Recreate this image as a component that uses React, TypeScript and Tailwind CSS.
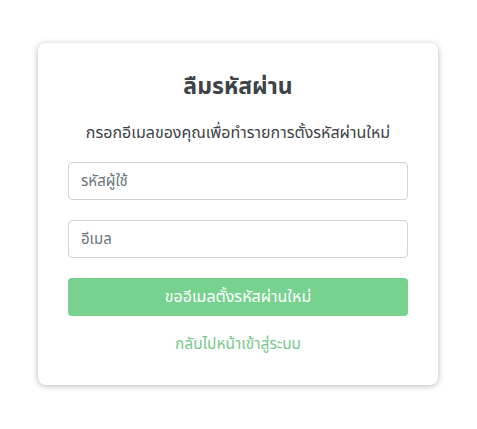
import React from 'react';

export default function App() {
  const [username, setUsername] = React.useState('');
  const [email, setEmail] = React.useState('');

  return (
    <div className="min-h-screen w-full bg-white font-['Noto_Sans_Thai','Noto_Sans','Liberation_Sans',sans-serif]">
      <div className="pt-[43px] pl-[38px]">
        <div className="w-[400px] rounded-lg bg-white px-[30px] pt-[28px] pb-[28px] shadow-[0_1px_6px_rgba(0,0,0,0.28)]">
          <h1 className="text-center text-[23px] font-bold leading-[32px] text-[#3d4348]">ลืมรหัสผ่าน</h1>

          <p className="mt-[18px] text-center text-[16px] leading-[24px] text-[#3d4348]">
            กรอกอีเมลของคุณเพื่อทำรายการตั้งรหัสผ่านใหม่
          </p>

          <form className="mt-[17px] flex flex-col" onSubmit={(e) => e.preventDefault()}>
            <input
              value={username}
              onChange={(e) => setUsername(e.target.value)}
              placeholder="รหัสผู้ใช้"
              className="h-[38px] w-full rounded border border-[#ced4da] px-3 text-[15px] text-[#495057] outline-none placeholder:text-[#6c757d]"
            />
            <input
              value={email}
              onChange={(e) => setEmail(e.target.value)}
              placeholder="อีเมล"
              className="mt-[20px] h-[38px] w-full rounded border border-[#ced4da] px-3 text-[15px] text-[#495057] outline-none placeholder:text-[#6c757d]"
            />
            <button
              type="submit"
              className="mt-[20px] h-[38px] w-full rounded bg-[#77d18f] text-[16px] text-white"
            >
              ขออีเมลตั้งรหัสผ่านใหม่
            </button>
          </form>

          <div className="mt-[16px] text-center">
            <a href="#" className="text-[15.5px] leading-[24px] text-[#77c98a]">กลับไปหน้าเข้าสู่ระบบ</a>
          </div>
        </div>
      </div>
    </div>
  );
}
